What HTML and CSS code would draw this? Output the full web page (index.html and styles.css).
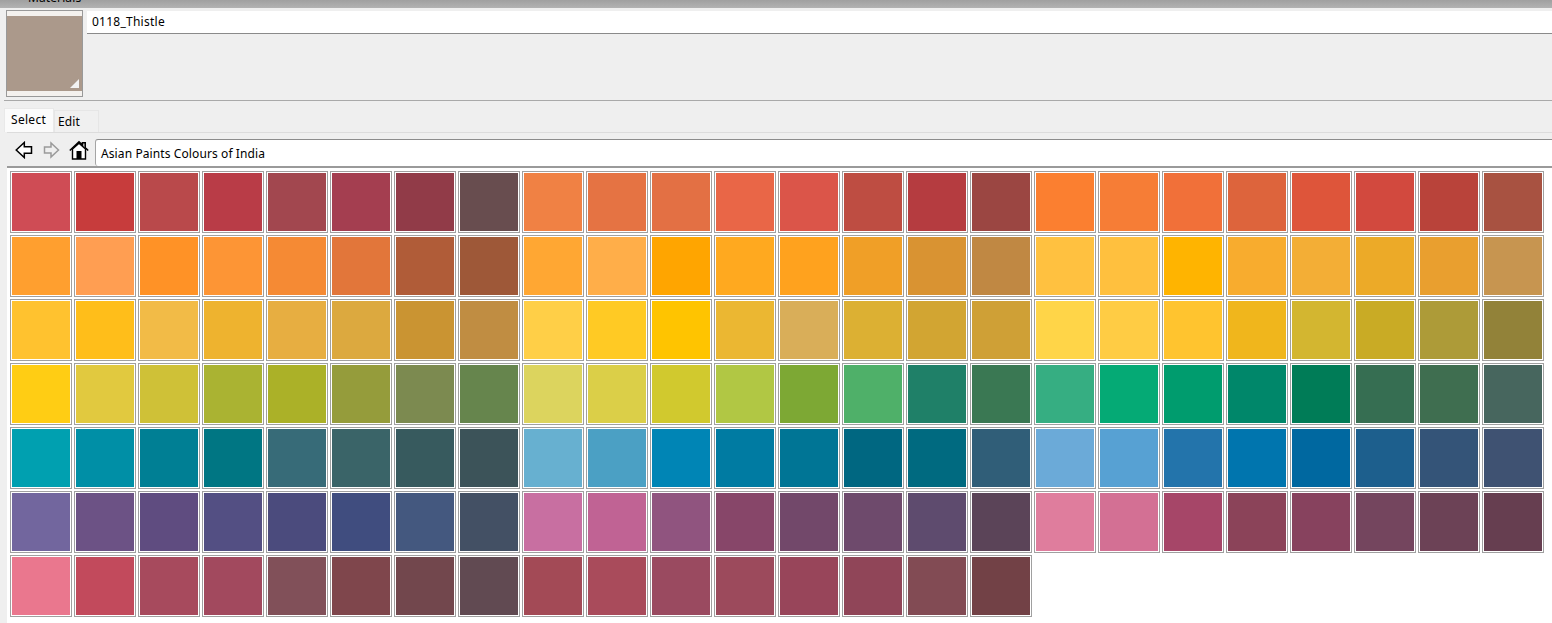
FILE: index.html
```html
<!DOCTYPE html>
<html lang="en">
<head>
  <meta charset="UTF-8">
  <meta name="viewport" content="width=device-width, initial-scale=1.0">
  <title>Materials</title>
  <link rel="stylesheet" href="styles.css">
</head>
<body>
  <div class="title-bar"><span class="title-text">Materials</span></div>

  <!-- Current material -->
  <div class="current">
    <div class="preview">
      <div class="preview-color"><span class="preview-corner"></span></div>
    </div>
    <div class="name-box">0118_Thistle</div>
  </div>

  <div class="panel">
    <div class="tabs">
      <span class="tab active">Select</span>
      <span class="tab">Edit</span>
    </div>

    <div class="tab-body">
      <div class="nav-row">
        <svg class="nav-icon" width="18" height="18" viewBox="0 0 18 18"><path d="M1.200 9 9.300 1.500v4.300H16.500v6.400H9.300v4.300z" fill="#fff" stroke="#000" stroke-width="1.500"/></svg>
        <svg class="nav-icon" width="18" height="18" viewBox="0 0 18 18"><path d="M15.500 9 8 2v4H1.500v6H8v4z" fill="#efefef" stroke="#9a9a9a" stroke-width="1.500"/></svg>
        <svg class="home-icon" width="20" height="20" viewBox="0 0 20 20"><path d="M.8 10.500 10 1.800l3.500 3.300V2.800h2.700v4.900l3 2.800" fill="none" stroke="#000" stroke-width="1.600"/><path d="M3.500 9v10h13V9L10 3.200z" fill="#fff" stroke="#000" stroke-width="1.400"/><path d="M7.500 19v-8h5v8z" fill="#000"/></svg>
        <div class="collection">Asian Paints Colours of India</div>
      </div>

      <div class="swatches">
        <div class="swatch"><i style="background:#cf4c55"></i></div>
        <div class="swatch"><i style="background:#c73c3c"></i></div>
        <div class="swatch"><i style="background:#b9494b"></i></div>
        <div class="swatch"><i style="background:#b93c47"></i></div>
        <div class="swatch"><i style="background:#a2474f"></i></div>
        <div class="swatch"><i style="background:#a43e50"></i></div>
        <div class="swatch"><i style="background:#913b48"></i></div>
        <div class="swatch"><i style="background:#684d4f"></i></div>
        <div class="swatch"><i style="background:#f08144"></i></div>
        <div class="swatch"><i style="background:#e57343"></i></div>
        <div class="swatch"><i style="background:#e37044"></i></div>
        <div class="swatch"><i style="background:#e96647"></i></div>
        <div class="swatch"><i style="background:#db5549"></i></div>
        <div class="swatch"><i style="background:#be4d42"></i></div>
        <div class="swatch"><i style="background:#b53c40"></i></div>
        <div class="swatch"><i style="background:#9b4642"></i></div>
        <div class="swatch"><i style="background:#fb7f30"></i></div>
        <div class="swatch"><i style="background:#f67d36"></i></div>
        <div class="swatch"><i style="background:#f17039"></i></div>
        <div class="swatch"><i style="background:#dd643c"></i></div>
        <div class="swatch"><i style="background:#de553a"></i></div>
        <div class="swatch"><i style="background:#d2493e"></i></div>
        <div class="swatch"><i style="background:#b9433a"></i></div>
        <div class="swatch"><i style="background:#a85241"></i></div>

        <div class="swatch"><i style="background:#ff9f2f"></i></div>
        <div class="swatch"><i style="background:#ff9e52"></i></div>
        <div class="swatch"><i style="background:#ff9226"></i></div>
        <div class="swatch"><i style="background:#fd9535"></i></div>
        <div class="swatch"><i style="background:#f58a34"></i></div>
        <div class="swatch"><i style="background:#e2763a"></i></div>
        <div class="swatch"><i style="background:#b05c38"></i></div>
        <div class="swatch"><i style="background:#9e5838"></i></div>
        <div class="swatch"><i style="background:#ffa733"></i></div>
        <div class="swatch"><i style="background:#ffae49"></i></div>
        <div class="swatch"><i style="background:#ffa500"></i></div>
        <div class="swatch"><i style="background:#ffa91f"></i></div>
        <div class="swatch"><i style="background:#ffa21e"></i></div>
        <div class="swatch"><i style="background:#f09f27"></i></div>
        <div class="swatch"><i style="background:#d99332"></i></div>
        <div class="swatch"><i style="background:#c08843"></i></div>
        <div class="swatch"><i style="background:#ffc140"></i></div>
        <div class="swatch"><i style="background:#ffc03e"></i></div>
        <div class="swatch"><i style="background:#ffb400"></i></div>
        <div class="swatch"><i style="background:#f8ac2e"></i></div>
        <div class="swatch"><i style="background:#f3ae36"></i></div>
        <div class="swatch"><i style="background:#ecaa28"></i></div>
        <div class="swatch"><i style="background:#e99f2f"></i></div>
        <div class="swatch"><i style="background:#c79550"></i></div>

        <div class="swatch"><i style="background:#ffc22f"></i></div>
        <div class="swatch"><i style="background:#ffbe1a"></i></div>
        <div class="swatch"><i style="background:#f2bb47"></i></div>
        <div class="swatch"><i style="background:#eeb32f"></i></div>
        <div class="swatch"><i style="background:#e7ae41"></i></div>
        <div class="swatch"><i style="background:#dca93f"></i></div>
        <div class="swatch"><i style="background:#ca9432"></i></div>
        <div class="swatch"><i style="background:#c08d42"></i></div>
        <div class="swatch"><i style="background:#ffcf47"></i></div>
        <div class="swatch"><i style="background:#ffca24"></i></div>
        <div class="swatch"><i style="background:#ffc400"></i></div>
        <div class="swatch"><i style="background:#ebb732"></i></div>
        <div class="swatch"><i style="background:#d9ae59"></i></div>
        <div class="swatch"><i style="background:#dcb033"></i></div>
        <div class="swatch"><i style="background:#d2a532"></i></div>
        <div class="swatch"><i style="background:#cfa036"></i></div>
        <div class="swatch"><i style="background:#ffd548"></i></div>
        <div class="swatch"><i style="background:#ffcc44"></i></div>
        <div class="swatch"><i style="background:#ffc42f"></i></div>
        <div class="swatch"><i style="background:#f0b61c"></i></div>
        <div class="swatch"><i style="background:#d3b630"></i></div>
        <div class="swatch"><i style="background:#c9ab25"></i></div>
        <div class="swatch"><i style="background:#ad9b38"></i></div>
        <div class="swatch"><i style="background:#928239"></i></div>

        <div class="swatch"><i style="background:#ffcd14"></i></div>
        <div class="swatch"><i style="background:#e1c93f"></i></div>
        <div class="swatch"><i style="background:#cfc137"></i></div>
        <div class="swatch"><i style="background:#aab332"></i></div>
        <div class="swatch"><i style="background:#abb128"></i></div>
        <div class="swatch"><i style="background:#959c3b"></i></div>
        <div class="swatch"><i style="background:#7c8a50"></i></div>
        <div class="swatch"><i style="background:#66854d"></i></div>
        <div class="swatch"><i style="background:#dcd45e"></i></div>
        <div class="swatch"><i style="background:#dbcf48"></i></div>
        <div class="swatch"><i style="background:#d1c92e"></i></div>
        <div class="swatch"><i style="background:#b1c744"></i></div>
        <div class="swatch"><i style="background:#7da834"></i></div>
        <div class="swatch"><i style="background:#4fb069"></i></div>
        <div class="swatch"><i style="background:#1f8068"></i></div>
        <div class="swatch"><i style="background:#3a7853"></i></div>
        <div class="swatch"><i style="background:#36ae82"></i></div>
        <div class="swatch"><i style="background:#05aa75"></i></div>
        <div class="swatch"><i style="background:#009c6e"></i></div>
        <div class="swatch"><i style="background:#00876a"></i></div>
        <div class="swatch"><i style="background:#007c57"></i></div>
        <div class="swatch"><i style="background:#366e52"></i></div>
        <div class="swatch"><i style="background:#3f6e50"></i></div>
        <div class="swatch"><i style="background:#47665e"></i></div>

        <div class="swatch"><i style="background:#00a0b0"></i></div>
        <div class="swatch"><i style="background:#008fa6"></i></div>
        <div class="swatch"><i style="background:#007f94"></i></div>
        <div class="swatch"><i style="background:#007683"></i></div>
        <div class="swatch"><i style="background:#376b78"></i></div>
        <div class="swatch"><i style="background:#3a6468"></i></div>
        <div class="swatch"><i style="background:#375a5e"></i></div>
        <div class="swatch"><i style="background:#3c5359"></i></div>
        <div class="swatch"><i style="background:#67b0d0"></i></div>
        <div class="swatch"><i style="background:#4ba0c4"></i></div>
        <div class="swatch"><i style="background:#0085b5"></i></div>
        <div class="swatch"><i style="background:#007ba2"></i></div>
        <div class="swatch"><i style="background:#007595"></i></div>
        <div class="swatch"><i style="background:#006781"></i></div>
        <div class="swatch"><i style="background:#006a80"></i></div>
        <div class="swatch"><i style="background:#305e78"></i></div>
        <div class="swatch"><i style="background:#6baad8"></i></div>
        <div class="swatch"><i style="background:#57a1d3"></i></div>
        <div class="swatch"><i style="background:#2374ab"></i></div>
        <div class="swatch"><i style="background:#0075ae"></i></div>
        <div class="swatch"><i style="background:#0068a0"></i></div>
        <div class="swatch"><i style="background:#1d5f8d"></i></div>
        <div class="swatch"><i style="background:#345478"></i></div>
        <div class="swatch"><i style="background:#3f5272"></i></div>

        <div class="swatch"><i style="background:#72669e"></i></div>
        <div class="swatch"><i style="background:#6c5285"></i></div>
        <div class="swatch"><i style="background:#5f4c80"></i></div>
        <div class="swatch"><i style="background:#534f83"></i></div>
        <div class="swatch"><i style="background:#4b4b7d"></i></div>
        <div class="swatch"><i style="background:#404d7f"></i></div>
        <div class="swatch"><i style="background:#44587f"></i></div>
        <div class="swatch"><i style="background:#435064"></i></div>
        <div class="swatch"><i style="background:#c86fa1"></i></div>
        <div class="swatch"><i style="background:#c06394"></i></div>
        <div class="swatch"><i style="background:#90547f"></i></div>
        <div class="swatch"><i style="background:#874669"></i></div>
        <div class="swatch"><i style="background:#72486a"></i></div>
        <div class="swatch"><i style="background:#6e4a6c"></i></div>
        <div class="swatch"><i style="background:#5e4b6e"></i></div>
        <div class="swatch"><i style="background:#5b4458"></i></div>
        <div class="swatch"><i style="background:#df7d9d"></i></div>
        <div class="swatch"><i style="background:#d37094"></i></div>
        <div class="swatch"><i style="background:#a64668"></i></div>
        <div class="swatch"><i style="background:#8b4359"></i></div>
        <div class="swatch"><i style="background:#87425e"></i></div>
        <div class="swatch"><i style="background:#74455e"></i></div>
        <div class="swatch"><i style="background:#6c4256"></i></div>
        <div class="swatch"><i style="background:#663e50"></i></div>

        <div class="swatch"><i style="background:#ea778e"></i></div>
        <div class="swatch"><i style="background:#c24a5c"></i></div>
        <div class="swatch"><i style="background:#a74a5d"></i></div>
        <div class="swatch"><i style="background:#a2495e"></i></div>
        <div class="swatch"><i style="background:#815059"></i></div>
        <div class="swatch"><i style="background:#7f464c"></i></div>
        <div class="swatch"><i style="background:#72474d"></i></div>
        <div class="swatch"><i style="background:#614a52"></i></div>
        <div class="swatch"><i style="background:#a34a56"></i></div>
        <div class="swatch"><i style="background:#a94b5b"></i></div>
        <div class="swatch"><i style="background:#9a4a60"></i></div>
        <div class="swatch"><i style="background:#9c4a5c"></i></div>
        <div class="swatch"><i style="background:#98455a"></i></div>
        <div class="swatch"><i style="background:#904558"></i></div>
        <div class="swatch"><i style="background:#824b54"></i></div>
        <div class="swatch"><i style="background:#724146"></i></div>
      </div>
    </div>
  </div>
</body>
</html>
```

FILE: styles.css
```css
html, body {
  height: 100%;
}

body {
  margin: 0;
  overflow: hidden;
  background-color: #efefef;
  color: #000;
  font-family: "Noto Sans", sans-serif;
  font-size: 12px;
  letter-spacing: 0.1px;
}

.title-bar {
  height: 8px;
  overflow: hidden;
  background: linear-gradient(to bottom, #a0a0a0, #b2b2b2);
  padding-left: 28px;
}

.title-text {
  display: block;
  margin-top: -11px;
  line-height: 17px;
}

/* Current material */
.current {
  display: flex;
  align-items: flex-start;
  gap: 4px;
  height: 92px;
  margin-left: 6px;
  padding-top: 2px;
  box-sizing: border-box;
}

.preview {
  box-sizing: border-box;
  width: 77px;
  height: 87px;
  border: 1px solid #999;
  background-color: #f4f1ee;
  padding: 5px 0;
}

.preview-color {
  position: relative;
  height: 75px;
  background-color: #ab998b;
}

.preview-corner {
  position: absolute;
  right: 3px;
  bottom: 3px;
  border-style: solid;
  border-width: 0 0 9px 9px;
  border-color: transparent transparent #f2f2f2 transparent;
}

.name-box {
  flex: 1;
  box-sizing: border-box;
  height: 23px;
  padding: 2px 5px;
  margin-top: 1px;
  background-color: #fff;
  border-bottom: 1px solid #8a8a8a;
  letter-spacing: 0.25px;
}

.panel {
  margin-left: 4px;
  border-top: 1px solid #a9a9a9;
}

/* Tabs */
.tabs {
  display: flex;
  align-items: flex-end;
  height: 31px;
  padding-top: 8px;
  box-sizing: border-box;
}

.tab {
  box-sizing: border-box;
  width: 45px;
  height: 22px;
  padding: 2px 0 0 3px;
  border: 1px solid #e6e6e6;
  border-bottom: 0;
  background-color: #f0f0f0;
}

.tab.active {
  width: 50px;
  height: 24px;
  padding: 2px 0 0 6px;
  border-color: #e9e9e9;
  background-color: #fbfbfb;
  letter-spacing: 0.3px;
}

.tab-body {
  border-top: 1px solid #dcdcdc;
  margin-left: 3px;
}

.nav-row {
  display: flex;
  align-items: center;
  height: 33px;
  padding-left: 8px;
  border-bottom: 2px solid #9a9a9a;
}

.nav-icon {
  margin-right: 10px;
}

.home-icon {
  margin: 0 6px 0 -2px;
}

.collection {
  flex: 1;
  align-self: flex-end;
  box-sizing: border-box;
  height: 27px;
  line-height: 28px;
  padding-left: 5px;
  background-color: #fff;
  border: 1px solid #a5a5a5;
  border-top-color: #8c8c8c;
  border-right: 0;
  border-bottom: 0;
  border-radius: 3px 0 0 3px;
}

/* Swatch grid */
.swatches {
  display: grid;
  grid-template-columns: repeat(24, 62px);
  grid-auto-rows: 62px;
  gap: 2px;
  height: 460px;
  padding: 3px 0 0 3px;
  background-color: #fff;
}

.swatch {
  box-sizing: border-box;
  border: 1px solid #a0a0a0;
  padding: 1px;
  background-color: #fff;
}

.swatch i {
  display: block;
  height: 100%;
}
```
